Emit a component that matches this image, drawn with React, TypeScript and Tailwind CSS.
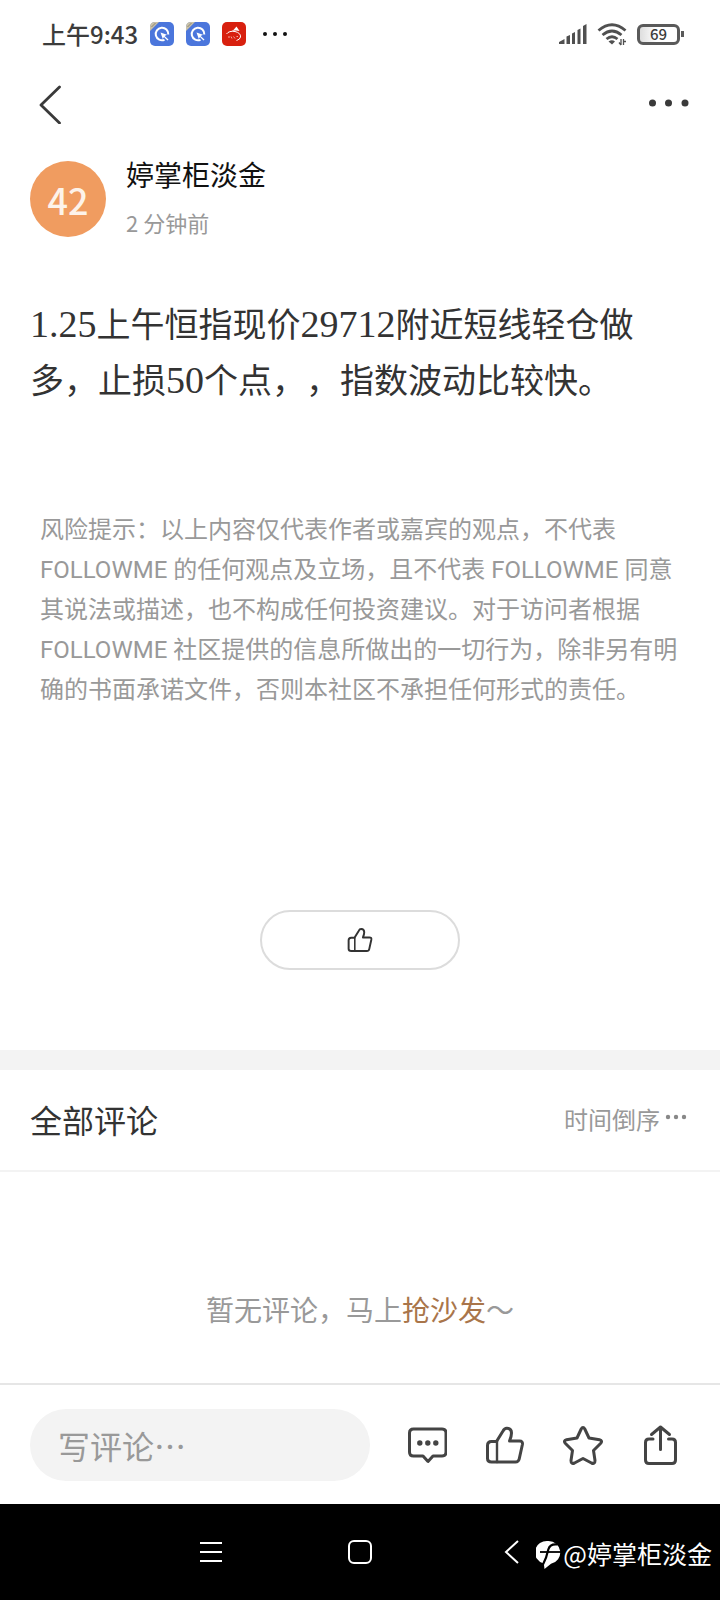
const DISCLAIMER =
    "风险提示：以上内容仅代表作者或嘉宾的观点，不代表 FOLLOWME 的任何观点及立场，且不代表 FOLLOWME 同意其说法或描述，也不构成任何投资建议。对于访问者根据 FOLLOWME 社区提供的信息所做出的一切行为，除非另有明确的书面承诺文件，否则本社区不承担任何形式的责任。";

const ThumbIcon = ({ className, stroke }: { className: string; stroke: number }) => (
    <svg className={className} viewBox="0 0 40 40" fill="none" stroke="currentColor" strokeWidth={stroke} strokeLinejoin="round" strokeLinecap="round" aria-hidden="true">
        <path d="M11.500 16.500H6.500Q2.500 16.500 2.500 20.500V33.500Q2.500 37 6.500 37H30.500Q33.500 37 34.200 34L37.400 19.500Q38 16 34.500 16H24.500Q26.500 11.500 26.500 8Q26.500 3.500 22 3.200Q19.500 3 18 6L11.500 16.500" />
        <path d="M12 16.500V37" strokeWidth="2.400" />
    </svg>
);

const BrowserAppIcon = () => (
    <svg className="size-6" viewBox="0 0 24 24" aria-hidden="true">
        <rect width="24" height="24" rx="5" fill="#4b76dc" />
        <path d="M0 9V5Q0 0 5 0H9Z" fill="#c9c1a8" />
        <path d="M1.500 5L5.500 1" stroke="#8d8674" strokeWidth="1" />
        <path d="M14.500 17.800A6.300 6.300 0 1 1 18.300 12.500" fill="none" stroke="#fff" strokeWidth="2" />
        <path d="M10.500 10.500L17 12.800L14.600 14L18.500 17.500L17.500 18.500L14 15L12.800 17Z" fill="#fff" />
    </svg>
);

const StatusBar = () => (
    <div className="h-[68px] flex items-center justify-between pl-[42px] pr-9 text-[#3c3c3c]">
        <div className="flex items-center gap-3">
            <span className="text-[24px] leading-6 font-medium">上午9:43</span>
            <BrowserAppIcon />
            <BrowserAppIcon />
            <svg className="size-6" viewBox="0 0 24 24" aria-hidden="true">
                <rect width="24" height="24" rx="5" fill="#d8200f" />
                <path d="M9 9.500Q12 8 14.500 4.500L17.500 9Q13 8 9 9.500Z" fill="#fff" />
                <path d="M4.500 12Q7 8.500 13 9.500Q19 11 18.500 15Q18 17.500 14.500 18.500" fill="none" stroke="#fff" strokeWidth="1" />
                <path d="M6 15h2M9 14.500l1 2M11.500 14.500l1.500 2M14.500 14.500h1.500" stroke="#f3a59b" strokeWidth="1" />
            </svg>
            <svg className="ml-1 w-7 h-6" viewBox="0 0 28 24" fill="#111" aria-hidden="true">
                <circle cx="3" cy="12" r="2" />
                <circle cx="13" cy="12" r="2" />
                <circle cx="23" cy="12" r="2" />
            </svg>
        </div>
        <div className="flex items-center gap-[10px]">
            <svg className="w-7 h-5" viewBox="0 0 28 20" fill="#505050" aria-hidden="true">
                <path d="M0 20V18L5.500 15V20ZM7.500 20V12.500L11 11V20ZM13 20V9.500L16 8V20ZM18.500 20V6L21.500 4.500V20ZM24 20V2L27.500 0V20Z" />
            </svg>
            <svg className="w-[30px] h-6" viewBox="0 0 30 24" fill="none" stroke="#505050" aria-hidden="true">
                <path d="M1.500 8.500Q15 -3 28.500 8.500" strokeWidth="2.800" />
                <path d="M5.500 13Q15 5 24.500 13" strokeWidth="2.800" />
                <path d="M9.500 17Q15 12.500 20.500 17" strokeWidth="2.800" />
                <path d="M11.500 19.500Q15 17 18 19.500L15 22.500Z" fill="#505050" stroke="none" />
                <path d="M24 17V23M22 20.500L24 23M26.500 23V17M26.500 19.500H29" strokeWidth="1.300" />
            </svg>
            <div className="flex items-center gap-[1px]">
                <div className="w-[43px] h-[21px] rounded-[6px] border-[3px] border-[#5a5a5a] bg-linear-to-r from-[#dedede] to-white to-45% flex items-center justify-center text-[15px] leading-4 font-medium">
                    69
                </div>
                <div className="w-[3px] h-[6px] bg-[#5a5a5a]" />
            </div>
        </div>
    </div>
);

const Header = () => (
    <header className="h-[72px] flex items-center justify-between pl-[38px] pr-[29px] text-[#3a3a3a]">
        <button type="button" aria-label="返回">
            <svg className="w-6 h-10" viewBox="0 0 24 40" fill="none" stroke="currentColor" strokeWidth="2.800" strokeLinecap="round" strokeLinejoin="round">
                <path d="M21.500 3L3 21L21.500 39" />
            </svg>
        </button>
        <button type="button" aria-label="更多">
            <svg className="w-[42px] h-3" viewBox="0 0 42 12" fill="currentColor">
                <circle cx="3.500" cy="5" r="3.500" />
                <circle cx="19.500" cy="5" r="3.500" />
                <circle cx="36" cy="5" r="3.500" />
            </svg>
        </button>
    </header>
);

const Num = ({ children }: { children: string }) => (
    <span className="text-[38px] leading-10 font-['Liberation_Serif',serif]">{children}</span>
);

const Post = () => (
    <article>
        <div className="flex items-center gap-5 px-[30px] pt-[18px]">
            <div className="size-[76px] rounded-full bg-[#f09c60] text-[#fdf3ea] flex items-center justify-center text-[36px] leading-10 font-medium">
                42
            </div>
            <div>
                <div className="text-[28px] leading-8 text-[#111]">婷掌柜淡金</div>
                <div className="mt-[14px] text-[22px] leading-9 text-[#999]">2 分钟前</div>
            </div>
        </div>
        {/* figures are set in a serif face */}
        <p className="mt-[55px] px-[30px] text-[34px] leading-14 text-[#333] [text-spacing-trim:space-all]">
            <Num>1.25</Num>上午恒指现价<Num>29712</Num>附近短线轻仓做多，止损<Num>50</Num>个点，，指数波动比较快。
        </p>
        <p className="mt-[103px] px-10 text-[24px] leading-10 text-[#999] font-[Roboto,'Noto_Sans_CJK_SC',sans-serif]">
            {DISCLAIMER}
        </p>
        <div className="mt-[200px] flex justify-center">
            <button type="button" aria-label="点赞" className="w-[200px] h-[60px] rounded-full border-2 border-[#dcdcdc] flex items-center justify-center text-[#333]">
                <ThumbIcon className="size-[26px]" stroke={3} />
            </button>
        </div>
    </article>
);

const Comments = () => (
    <section className="mt-20 border-t-20 border-[#f3f3f3]">
        <div className="h-[102px] flex items-center justify-between px-[30px] pb-[2px] border-b-2 border-[#f3f3f3]">
            <h2 className="text-[32px] leading-10 text-[#333]">全部评论</h2>
            <button type="button" className="flex items-center gap-1 text-[24px] leading-8 text-[#999]">
                时间倒序
                <svg className="w-[26px] h-6" viewBox="0 0 26 24" fill="#888" aria-hidden="true">
                    <circle cx="4" cy="10" r="2.200" />
                    <circle cx="12" cy="10" r="2.200" />
                    <circle cx="20" cy="10" r="2.200" />
                </svg>
            </button>
        </div>
        <p className="pt-[117px] pb-12 text-center text-[28px] leading-10 text-[#999]">
            暂无评论，马上<a href="#comment" className="text-[#a9754a]">抢沙发</a>～
        </p>
    </section>
);

const ActionBar = () => (
    <div className="h-[121px] border-t-2 border-[#e6e6e6] flex items-center justify-between gap-[37px] pl-[30px] pr-[39px] text-[#444]">
        <input
            id="comment"
            type="text"
            aria-label="写评论"
            placeholder="写评论…"
            className="flex-1 min-w-0 h-[72px] rounded-full bg-[#f3f3f3] px-7 text-[32px] leading-10 placeholder:text-[#999] outline-none"
        />
        <div className="flex items-center gap-[38px]">
            <button type="button" aria-label="评论">
                <svg className="size-10" viewBox="0 0 40 40" fill="none" stroke="currentColor" strokeWidth="3" strokeLinejoin="round">
                    <path d="M6.500 4H35Q39 4 39 8V27Q39 31 35 31H26L21 36.500L16 31H6.500Q2.500 31 2.500 27V8Q2.500 4 6.500 4Z" />
                    <g fill="currentColor" stroke="none">
                        <circle cx="12.800" cy="18" r="2.700" />
                        <circle cx="20.800" cy="18" r="2.700" />
                        <circle cx="28.800" cy="18" r="2.700" />
                    </g>
                </svg>
            </button>
            <button type="button" aria-label="点赞">
                <ThumbIcon className="size-10" stroke={3} />
            </button>
            <button type="button" aria-label="收藏">
                <svg className="size-10" viewBox="0 0 40 40" fill="none" stroke="currentColor" strokeWidth="3" strokeLinejoin="round">
                    <path d="M18.200 4Q20 0.800 21.800 4L26 13L36.500 14.800Q40 15.800 37.500 18.500L30.500 25.500L32 35.500Q32 39.500 28.500 38L20 33.500L11.500 38Q8 39.500 8 35.500L9.500 25.500L2.500 18.500Q0 15.800 3.500 14.800L14 13Z" />
                </svg>
            </button>
            <button type="button" aria-label="分享">
                <svg className="size-10" viewBox="0 0 40 40" fill="none" stroke="currentColor" strokeWidth="3" strokeLinecap="round" strokeLinejoin="round">
                    <path d="M12 14H8Q4.500 14 4.500 17.500V35Q4.500 38.500 8 38.500H31Q34.500 38.500 34.500 35V17.500Q34.500 14 31 14H27.500" />
                    <path d="M19.500 24.500V2.500M10.500 9.500L19.500 2L28.500 9.500" />
                </svg>
            </button>
        </div>
    </div>
);

const SystemNav = () => (
    <nav className="relative h-24 bg-black flex items-center justify-center gap-[126px] text-white">
        <button type="button" aria-label="最近任务">
            <svg className="size-6" viewBox="0 0 24 24" stroke="currentColor" strokeWidth="2">
                <path d="M2 3H24M2 12H24M2 21H24" />
            </svg>
        </button>
        <button type="button" aria-label="主页">
            <svg className="size-6" viewBox="0 0 24 24" fill="none" stroke="currentColor" strokeWidth="2">
                <rect x="1" y="1" width="22" height="22" rx="5" />
            </svg>
        </button>
        <button type="button" aria-label="后退">
            <svg className="size-6" viewBox="0 0 24 24" fill="none" stroke="currentColor" strokeWidth="2">
                <path d="M20 1L8 12L20 23" />
            </svg>
        </button>
        {/* watermark sits over the bar */}
        <div className="absolute right-2 top-0 h-full pt-[2px] flex items-center gap-[2px]">
            <svg className="w-[25px] h-8" viewBox="0 0 25 32" fill="#fff" aria-hidden="true">
                <path d="M12.500 4A12 11.500 0 0 1 15 26.700L8.500 32L7.800 26.500A12 11.500 0 0 1 12.500 4Z" />
                <path d="M21.500 7.500Q14 6.500 12.300 12.500Q10.500 21 7 27.500" fill="none" stroke="#000" strokeWidth="2.200" />
                <path d="M4 15H25" stroke="#000" strokeWidth="1.800" />
            </svg>
            <span className="text-[25px] leading-8">@婷掌柜淡金</span>
        </div>
    </nav>
);

const App = () => {
    return (
        <div className="min-h-screen flex flex-col bg-white font-['Noto_Sans_CJK_SC',sans-serif]" lang="zh-CN">
            <StatusBar />
            <Header />
            <main className="flex-1">
                <Post />
                <Comments />
            </main>
            <ActionBar />
            <SystemNav />
        </div>
    );
};

export default App;
